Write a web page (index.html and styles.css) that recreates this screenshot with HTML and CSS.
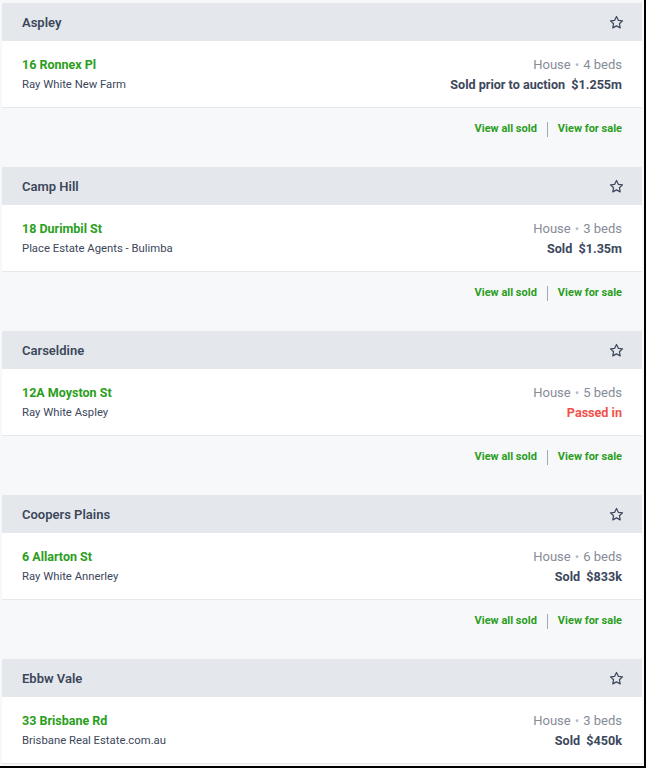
FILE: index.html
```html
<!DOCTYPE html>
<html lang="en">
<head>
<meta charset="utf-8">
<title>Sold properties</title>
<link rel="stylesheet" href="styles.css">
</head>
<body>
<div class="page">
  <section class="suburb">
    <header class="suburb-head">
      <h2 class="suburb-name">Aspley</h2>
      <svg class="star" viewBox="0 0 16 16" width="15" height="15"><path d="M8 1.6l1.95 4.1 4.45.55-3.27 3.08.84 4.42L8 11.6l-3.97 2.15.84-4.42L1.6 6.25l4.45-.55z" fill="none" stroke="currentColor" stroke-width="1.3" stroke-linejoin="round"/></svg>
    </header>
    <div class="listing">
      <div class="col">
        <a class="street">16 Ronnex Pl</a>
        <span class="agency">Ray White New Farm</span>
      </div>
      <div class="col right">
        <span class="meta">House <span class="dot">•</span> 4 beds</span>
        <span class="price">Sold prior to auction&nbsp; $1.255m</span>
      </div>
    </div>
    <div class="links"><a class="link">View all sold</a><span class="sep"></span><a class="link">View for sale</a></div>
  </section>

  <section class="suburb">
    <header class="suburb-head">
      <h2 class="suburb-name">Camp Hill</h2>
      <svg class="star" viewBox="0 0 16 16" width="15" height="15"><path d="M8 1.6l1.95 4.1 4.45.55-3.27 3.08.84 4.42L8 11.6l-3.97 2.15.84-4.42L1.6 6.25l4.45-.55z" fill="none" stroke="currentColor" stroke-width="1.3" stroke-linejoin="round"/></svg>
    </header>
    <div class="listing">
      <div class="col">
        <a class="street">18 Durimbil St</a>
        <span class="agency">Place Estate Agents - Bulimba</span>
      </div>
      <div class="col right">
        <span class="meta">House <span class="dot">•</span> 3 beds</span>
        <span class="price">Sold&nbsp; $1.35m</span>
      </div>
    </div>
    <div class="links"><a class="link">View all sold</a><span class="sep"></span><a class="link">View for sale</a></div>
  </section>

  <section class="suburb">
    <header class="suburb-head">
      <h2 class="suburb-name">Carseldine</h2>
      <svg class="star" viewBox="0 0 16 16" width="15" height="15"><path d="M8 1.6l1.95 4.1 4.45.55-3.27 3.08.84 4.42L8 11.6l-3.97 2.15.84-4.42L1.6 6.25l4.45-.55z" fill="none" stroke="currentColor" stroke-width="1.3" stroke-linejoin="round"/></svg>
    </header>
    <div class="listing">
      <div class="col">
        <a class="street">12A Moyston St</a>
        <span class="agency">Ray White Aspley</span>
      </div>
      <div class="col right">
        <span class="meta">House <span class="dot">•</span> 5 beds</span>
        <span class="price passed">Passed in</span>
      </div>
    </div>
    <div class="links"><a class="link">View all sold</a><span class="sep"></span><a class="link">View for sale</a></div>
  </section>

  <section class="suburb">
    <header class="suburb-head">
      <h2 class="suburb-name">Coopers Plains</h2>
      <svg class="star" viewBox="0 0 16 16" width="15" height="15"><path d="M8 1.6l1.95 4.1 4.45.55-3.27 3.08.84 4.42L8 11.6l-3.97 2.15.84-4.42L1.6 6.25l4.45-.55z" fill="none" stroke="currentColor" stroke-width="1.3" stroke-linejoin="round"/></svg>
    </header>
    <div class="listing">
      <div class="col">
        <a class="street">6 Allarton St</a>
        <span class="agency">Ray White Annerley</span>
      </div>
      <div class="col right">
        <span class="meta">House <span class="dot">•</span> 6 beds</span>
        <span class="price">Sold&nbsp; $833k</span>
      </div>
    </div>
    <div class="links"><a class="link">View all sold</a><span class="sep"></span><a class="link">View for sale</a></div>
  </section>

  <section class="suburb">
    <header class="suburb-head">
      <h2 class="suburb-name">Ebbw Vale</h2>
      <svg class="star" viewBox="0 0 16 16" width="15" height="15"><path d="M8 1.6l1.95 4.1 4.45.55-3.27 3.08.84 4.42L8 11.6l-3.97 2.15.84-4.42L1.6 6.25l4.45-.55z" fill="none" stroke="currentColor" stroke-width="1.3" stroke-linejoin="round"/></svg>
    </header>
    <div class="listing">
      <div class="col">
        <a class="street">33 Brisbane Rd</a>
        <span class="agency">Brisbane Real Estate.com.au</span>
      </div>
      <div class="col right">
        <span class="meta">House <span class="dot">•</span> 3 beds</span>
        <span class="price">Sold&nbsp; $450k</span>
      </div>
    </div>
  </section>
</div>
</body>
</html>
```

FILE: styles.css
```css
* { box-sizing: border-box; }
html, body { margin: 0; padding: 0; }
body {
  background: #f7f8fa;
  font-family: Roboto, "Liberation Sans", sans-serif;
  color: #3c475b;
}
.page {
  width: 646px;
  height: 768px;
  overflow: hidden;
  padding: 3px 2px 0 2px;
  border-right: 2px solid #000;
  border-bottom: 2px solid #000;
  background: #f7f8fa;
}
.suburb { width: 640px; }
.suburb-head {
  height: 38px;
  background: #e4e7eb;
  display: flex;
  align-items: center;
  justify-content: space-between;
  padding: 0 18px 0 20px;
}
.suburb-name {
  margin: 0;
  font-size: 13px;
  font-weight: 600;
  color: #3c475b;
}
.star { color: #3c475b; display: block; }
.listing {
  background: #fff;
  border-bottom: 1px solid #e6e8ec;
  display: flex;
  justify-content: space-between;
  padding: 14px 20px 12px;
}
.col { display: flex; flex-direction: column; }
.col.right { align-items: flex-end; }
.street {
  font-size: 12.5px;
  line-height: 20px;
  font-weight: 700;
  color: #2a9e1c;
}
.agency {
  font-size: 11.3px;
  line-height: 20px;
  color: #3c475b;
}
.meta {
  font-size: 13px;
  line-height: 20px;
  color: #868c98;
}
.dot { font-size: 12px; color: #b4b9c2; margin: 0 1px; }
.price {
  font-size: 12.6px;
  line-height: 20px;
  font-weight: 700;
  color: #3c475b;
}
.price.passed { color: #f2514b; }
.links {
  height: 59px;
  display: flex;
  justify-content: flex-end;
  align-items: flex-start;
  padding: 13px 20px 0;
}
.link {
  font-size: 11px;
  line-height: 16px;
  font-weight: 700;
  color: #2a9e1c;
}
.sep {
  width: 1px;
  height: 15px;
  background: #a3a8b2;
  margin: 1px 10px 0;
}
```
